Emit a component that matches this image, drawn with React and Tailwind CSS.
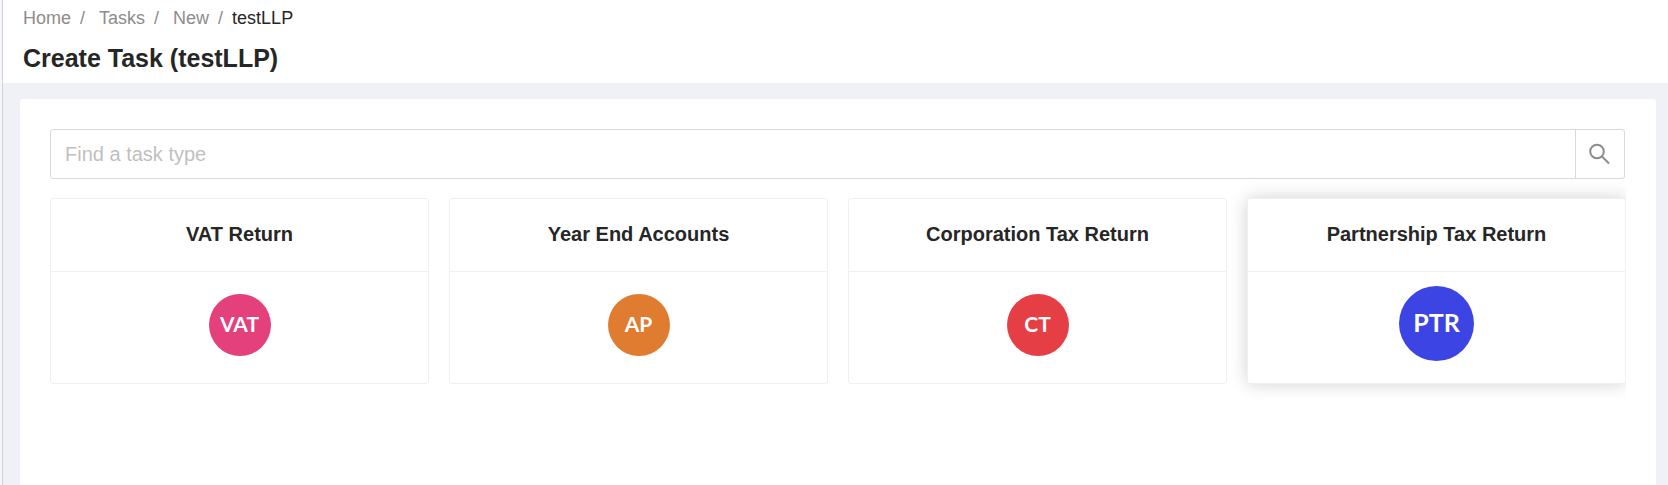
import React, { useState } from 'react';

const crumbs = [
    { label: 'Home', href: '#home' },
    { label: 'Tasks', href: '#tasks' },
    { label: 'New', href: '#new' },
];

const taskTypes = [
    { id: 'vat', title: 'VAT Return', short: 'VAT', color: 'bg-[#e4407b]' },
    { id: 'ap', title: 'Year End Accounts', short: 'AP', color: 'bg-[#e07c30]' },
    { id: 'ct', title: 'Corporation Tax Return', short: 'CT', color: 'bg-[#e53e45]' },
    { id: 'ptr', title: 'Partnership Tax Return', short: 'PTR', color: 'bg-[#3d44e4]' },
];

function Breadcrumb() {
    return (
        <nav aria-label="Breadcrumb">
            <ol className="flex text-[18px] leading-6 text-[#8c8c8c]">
                {crumbs.map((crumb, i) => (
                    <li key={crumb.label} className="flex">
                        <a href={crumb.href}>{crumb.label}</a>
                        <span className={i < crumbs.length - 1 ? 'mr-[14px] ml-[9px]' : 'mx-[9px]'}>/</span>
                    </li>
                ))}
                <li className="text-[#262626]">testLLP</li>
            </ol>
        </nav>
    );
}

function SearchBar({ value, onChange }) {
    return (
        <form className="mr-px flex h-[50px] rounded-[3px] border border-[#d9d9d9]" onSubmit={e => e.preventDefault()}>
            <input
                type="text"
                aria-label="Find a task type"
                placeholder="Find a task type"
                value={value}
                onChange={e => onChange(e.target.value)}
                className="min-w-0 flex-1 px-[14px] text-[20px] outline-none placeholder:text-[#bfbfbf]"
            />
            <button type="submit" aria-label="Search" className="flex w-[49px] items-center justify-center border-l border-[#d9d9d9]">
                <svg width="22" height="22" viewBox="0 0 22 22" fill="none" stroke="#8c8c8c" strokeWidth="2">
                    <circle cx="8" cy="8.5" r="6.8" />
                    <path d="M13 13.5l7 7" />
                </svg>
            </button>
        </form>
    );
}

function TaskCard({ task, active, onHover }) {
    return (
        <button
            type="button"
            onMouseEnter={onHover}
            className={`flex flex-col rounded-[3px] border border-[#f0f0f0] bg-white ${active ? 'shadow-[0_0_18px_rgba(0,0,0,0.18)]' : ''}`}
        >
            <span className="w-full border-b border-[#f0f0f0] pt-5 pb-[22px] text-[20px] leading-[30px] font-bold">{task.title}</span>
            <span className={`flex h-[111px] w-full justify-center ${active ? 'pt-[14px]' : 'pt-[22px]'}`}>
                <span
                    className={`flex items-center justify-center rounded-full pb-0.5 font-[Lato,sans-serif] font-bold text-white ${task.color} ${active ? 'size-[75px] text-[25px]' : 'size-[62px] text-[21px]'}`}
                >
                    {task.short}
                </span>
            </span>
        </button>
    );
}

function App() {
    const [search, setSearch] = useState('');
    const [hovered, setHovered] = useState('ptr');

    const visible = taskTypes.filter(task => task.title.toLowerCase().includes(search.toLowerCase()));

    return (
        <div className="flex min-h-screen bg-[#f7f7fa] pl-[2px] font-['Liberation_Sans',Arial,sans-serif] text-[#262626]">
            <div className="flex flex-1 flex-col border-l border-[#cfd0da] bg-[#f0f1f6]">
                <header className="bg-white px-5 pt-[6px] pb-[7px]">
                    <Breadcrumb />
                    <h1 className="mt-[11px] text-[25px] leading-[35px] font-bold">Create Task (testLLP)</h1>
                </header>
                <main className="mt-4 mr-3 ml-[17px] flex-1 rounded-t-[3px] bg-white p-[30px]">
                    <SearchBar value={search} onChange={setSearch} />
                    {/* clips the card shadow at the right edge of the grid */}
                    <div className="-ml-5 overflow-hidden pt-[19px] pb-5 pl-5">
                        <div className="grid grid-cols-4 gap-5">
                            {visible.map(task => (
                                <TaskCard
                                    key={task.id}
                                    task={task}
                                    active={hovered === task.id}
                                    onHover={() => setHovered(task.id)}
                                />
                            ))}
                        </div>
                    </div>
                </main>
            </div>
        </div>
    );
}

export default App;
